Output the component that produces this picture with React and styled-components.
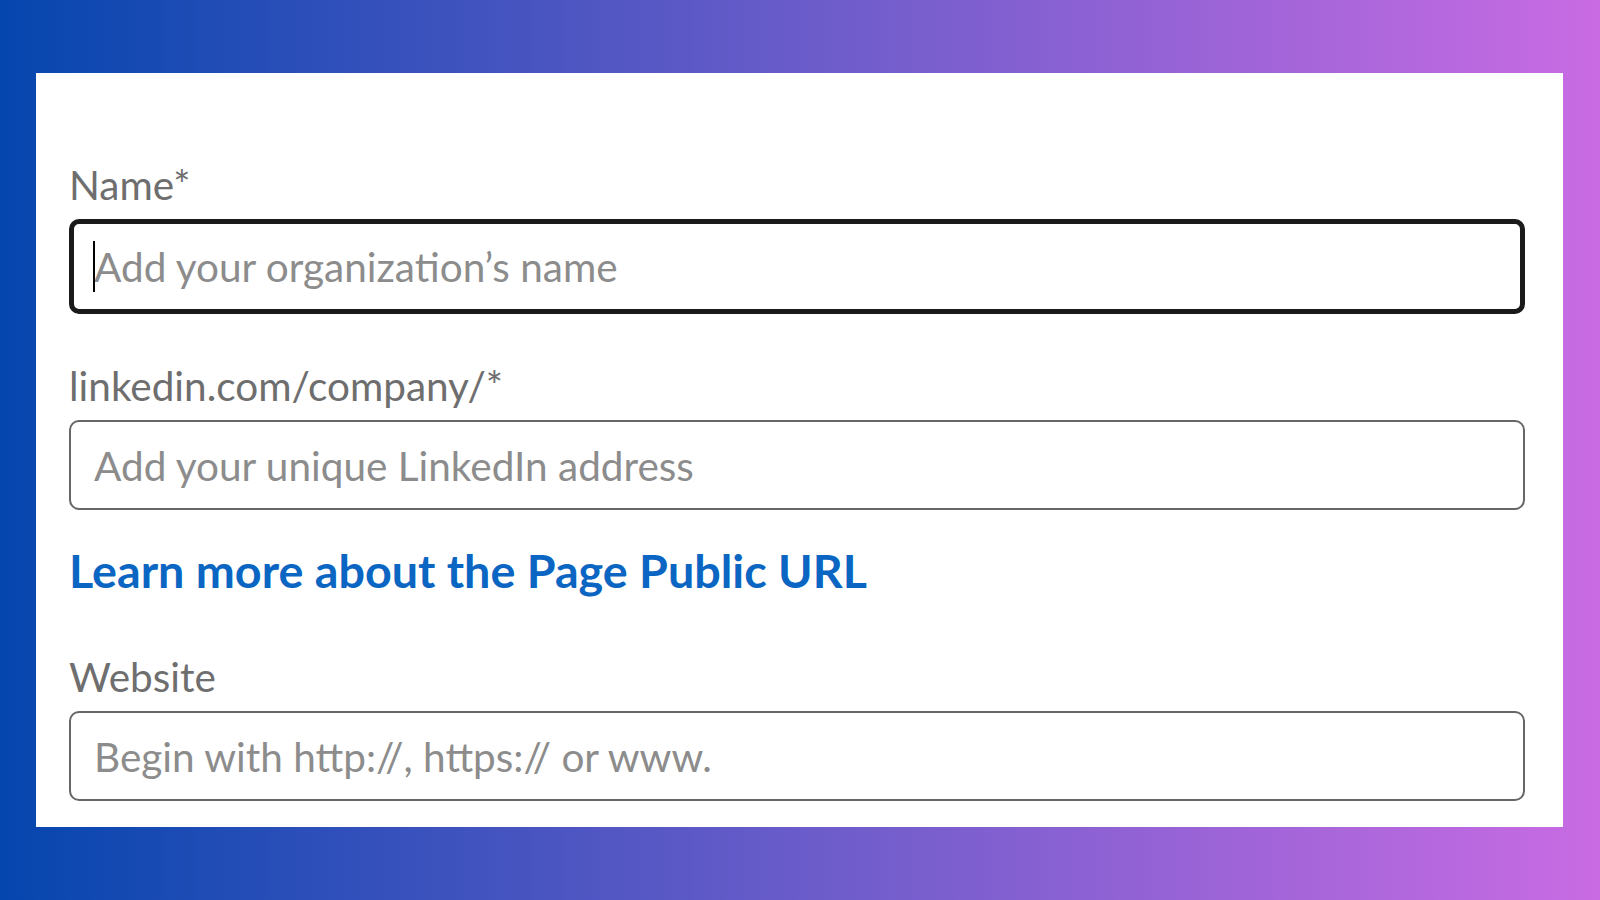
import React from "react";
import styled, { createGlobalStyle } from "styled-components";

const GlobalStyle = createGlobalStyle`
  html, body {
    margin: 0;
    padding: 0;
    width: 1600px;
    height: 900px;
    overflow: hidden;
  }
  * {
    box-sizing: border-box;
  }
`;

const Backdrop = styled.div`
  width: 1600px;
  height: 900px;
  padding: 73px 37px 73px 36px;
  background: linear-gradient(90deg, #0546ae 0%, #6a5cca 50%, #c96be3 100%);
  font-family: "Lato", "Open Sans", sans-serif;
`;

const Card = styled.form`
  height: 754px;
  background: #fff;
  padding: 88px 38px 0 33px;
  display: flex;
  flex-direction: column;
`;

const Field = styled.div`
  display: flex;
  flex-direction: column;
  margin-bottom: ${(p) => p.$gap || 0}px;
`;

const Label = styled.label`
  font-size: 40.5px;
  line-height: 48px;
  color: #6e6e6e;
  margin-bottom: 10px;
`;

const InputWrap = styled.div`
  position: relative;
`;

const Input = styled.input`
  width: 100%;
  height: ${(p) => (p.$focused ? 95 : 90)}px;
  border: ${(p) => (p.$focused ? "5px solid #1a1a1a" : "2px solid #666")};
  border-radius: 10px;
  padding: 0 ${(p) => (p.$focused ? 20 : 23)}px;
  font-family: inherit;
  font-size: 40.5px;
  color: #333;
  background: #fff;
  outline: none;
  &::placeholder {
    color: #8c8c8c;
  }
`;

const Caret = styled.span`
  position: absolute;
  left: 24px;
  top: 22px;
  width: 2px;
  height: 51px;
  background: #000;
`;

const LearnLink = styled.a`
  font-size: 46.7px;
  font-weight: 700;
  line-height: 56px;
  color: #0a66c2;
  text-decoration: none;
  align-self: flex-start;
  margin-bottom: 55px;
`;

export default function App() {
  return (
    <>
      <GlobalStyle />
      <Backdrop>
        <Card onSubmit={(e) => e.preventDefault()}>
          <Field $gap={48}>
            <Label htmlFor="org-name">Name*</Label>
            <InputWrap>
              <Input
                id="org-name"
                $focused
                placeholder="Add your organization’s name"
              />
              <Caret />
            </InputWrap>
          </Field>
          <Field $gap={32}>
            <Label htmlFor="org-url">linkedin.com/company/*</Label>
            <Input id="org-url" placeholder="Add your unique LinkedIn address" />
          </Field>
          <LearnLink href="#">Learn more about the Page Public URL</LearnLink>
          <Field>
            <Label htmlFor="org-site">Website</Label>
            <Input id="org-site" placeholder="Begin with http://, https:// or www." />
          </Field>
        </Card>
      </Backdrop>
    </>
  );
}
